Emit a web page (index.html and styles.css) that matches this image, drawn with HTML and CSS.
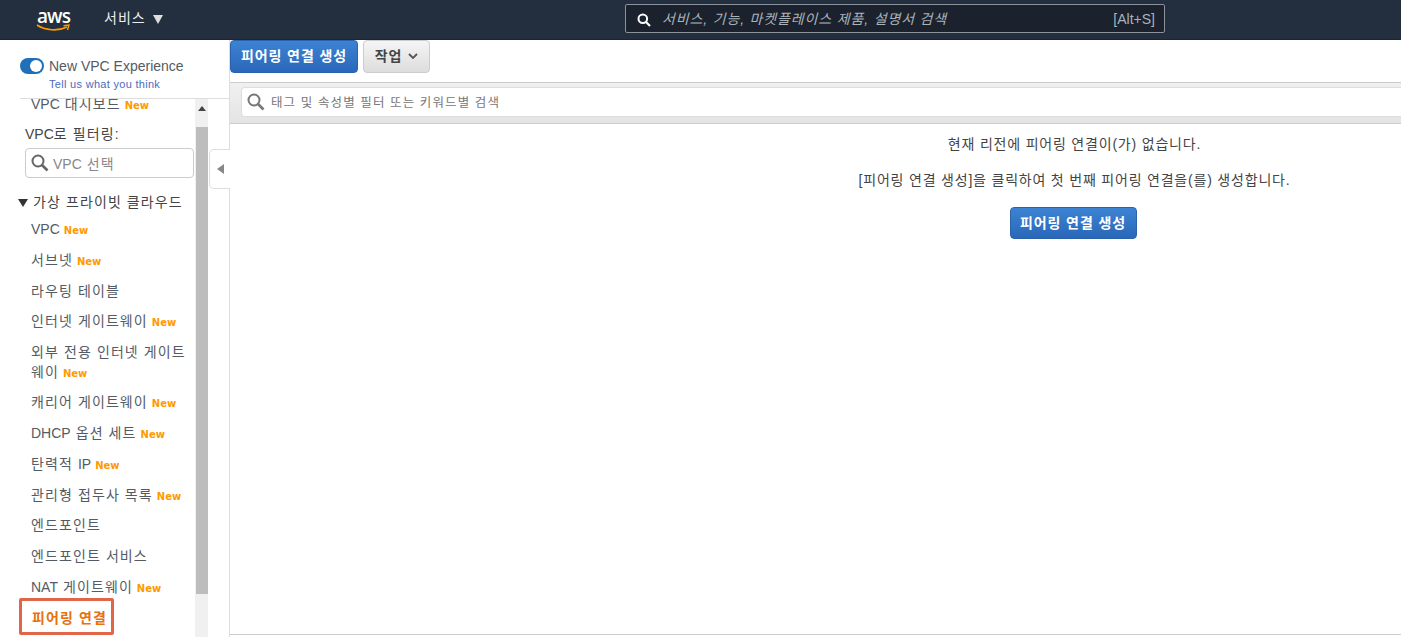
FILE: index.html
```html
<!DOCTYPE html>
<html lang="ko">
<head>
<meta charset="utf-8">
<title>VPC 피어링 연결</title>
<link rel="stylesheet" href="styles.css">
</head>
<body>
<header class="topbar">
  <a class="logo">
    <span class="logo-text">aws</span>
    <svg class="logo-smile" viewBox="0 0 34 8" width="34" height="8"><path d="M1 1C9 6.500 22 7.500 31 3" fill="none" stroke="#f90" stroke-width="1.600"/><path d="M27.500 1.800L33 1L31.500 6" fill="none" stroke="#f90" stroke-width="1.400"/></svg>
  </a>
  <div class="services">서비스<span class="caret-down"></span></div>
  <div class="global-search">
    <svg class="gs-icon" viewBox="0 0 14 14" width="14" height="14"><circle cx="5.800" cy="5.800" r="4.300" fill="none" stroke="#fff" stroke-width="2"/><path d="M9 9L13 13" stroke="#fff" stroke-width="2.200"/></svg>
    <span class="gs-text">서비스, 기능, 마켓플레이스 제품, 설명서 검색</span>
    <span class="gs-key">[Alt+S]</span>
  </div>
</header>
<div class="page">
  <aside class="sidebar">
    <div class="experience">
      <div class="exp-row"><span class="toggle"><span class="knob"></span></span><span class="exp-label">New VPC Experience</span></div>
      <a class="exp-link">Tell us what you think</a>
    </div>
    <div class="side-body">
      <nav class="nav">
        <div class="item first"><span class="lat">VPC</span> 대시보드 <b>New</b></div>
        <div class="filter-label"><span class="lat">VPC</span>로 필터링:</div>
        <div class="vpc-select">
          <svg class="mag" viewBox="0 0 18 18" width="18" height="18"><circle cx="7" cy="7" r="5.500" fill="none" stroke="#666" stroke-width="2"/><path d="M11 11L16.500 16.500" stroke="#666" stroke-width="2.600"/></svg>
          <span><span class="lat">VPC</span> 선택</span>
        </div>
        <div class="section"><span class="tri"></span>가상 프라이빗 클라우드</div>
        <div class="item"><span class="lat">VPC</span> <b>New</b></div>
        <div class="item">서브넷 <b>New</b></div>
        <div class="item">라우팅 테이블</div>
        <div class="item">인터넷 게이트웨이 <b>New</b></div>
        <div class="item wrap">외부 전용 인터넷 게이트<br>웨이 <b>New</b></div>
        <div class="item">캐리어 게이트웨이 <b>New</b></div>
        <div class="item"><span class="lat">DHCP</span> 옵션 세트 <b>New</b></div>
        <div class="item">탄력적 <span class="lat">IP</span> <b>New</b></div>
        <div class="item">관리형 접두사 목록 <b>New</b></div>
        <div class="item">엔드포인트</div>
        <div class="item">엔드포인트 서비스</div>
        <div class="item"><span class="lat">NAT</span> 게이트웨이 <b>New</b></div>
        <div class="item active">피어링 연결</div>
      </nav>
      <div class="scrollbar">
        <div class="sb-arrow"></div>
        <div class="sb-thumb"></div>
      </div>
      <div class="collapse"><span class="tri-left"></span></div>
    </div>
  </aside>
  <main class="main">
    <div class="toolbar">
      <button class="btn primary">피어링 연결 생성</button>
      <button class="btn secondary">작업<svg class="chev" viewBox="0 0 10 6" width="10" height="6"><path d="M1 1L5 5L9 1" fill="none" stroke="#555" stroke-width="1.800"/></svg></button>
    </div>
    <div class="filter-bar">
      <div class="filter-input">
        <svg class="mag" viewBox="0 0 18 18" width="18" height="18"><circle cx="7" cy="7" r="5.500" fill="none" stroke="#777" stroke-width="2"/><path d="M11 11L16.500 16.500" stroke="#777" stroke-width="2.600"/></svg>
        <span>태그 및 속성별 필터 또는 키워드별 검색</span>
      </div>
    </div>
    <div class="empty">
      <p class="msg-one">현재 리전에 피어링 연결이(가) 없습니다.</p>
      <p class="msg-two">[피어링 연결 생성]을 클릭하여 첫 번째 피어링 연결을(를) 생성합니다.</p>
      <button class="btn primary cta">피어링 연결 생성</button>
    </div>
  </main>
</div>
</body>
</html>
```
FILE: styles.css
```css
* { box-sizing: border-box; }
html, body { margin: 0; height: 100%; overflow: hidden; }
body {
  font-family: "Liberation Sans", "Noto Sans CJK KR", sans-serif;
  font-size: 14px;
  color: #444;
  background: #fff;
}
.lat { letter-spacing: 0; }
.topbar {
  height: 40px;
  background: #232f3e;
  display: flex;
  align-items: center;
  padding-bottom: 3px;
  border-bottom: 1px solid #1b2532;
}
.logo { width: 104px; flex: none; padding-left: 36px; display: block; }
.logo-text {
  display: block;
  color: #fff;
  font: 600 19px/16px "Open Sans", sans-serif;
  letter-spacing: -0.9px;
  padding-left: 1px;
  margin-top: 3px;
}
.logo-smile { display: block; }
.services { color: #eee; width: 521px; flex: none; display: flex; align-items: center; letter-spacing: 1px; line-height: 20px; }
.caret-down {
  margin-left: 7px;
  margin-top: 2px;
  width: 0; height: 0;
  border-left: 5.500px solid transparent;
  border-right: 5.500px solid transparent;
  border-top: 9px solid #ddd;
}
.global-search {
  width: 540px; height: 29px;
  margin-top: 1px;
  background: #1b222d;
  border: 1px solid #8a939b;
  border-radius: 2px;
  display: flex; align-items: center;
  padding: 0 9px 0 11px;
  color: #aab2ba;
}
.gs-icon { margin-right: 11px; margin-top: 2px; }
.gs-text { font-style: italic; flex: 1; letter-spacing: .85px; line-height: 20px; }
.gs-key { font-size: 14px; line-height: 20px; }
.page { display: flex; height: 597px; }
.sidebar { width: 230px; flex: none; border-right: 1px solid #ddd; display: flex; flex-direction: column; padding-left: 20px; }
.experience { height: 59px; border-bottom: 1px solid #ddd; padding-top: 17px; flex: none; }
.exp-row { display: flex; align-items: center; }
.toggle { width: 24px; height: 16px; border-radius: 8px; background: #1f6fb9; position: relative; margin-right: 5px; display: block; }
.knob { position: absolute; right: 2px; top: 2px; width: 12px; height: 12px; border-radius: 50%; background: #fff; }
.exp-label { font-size: 14px; color: #545b64; line-height: 18px; }
.exp-link { display: block; font-size: 11px; color: #4a6cc0; padding-left: 29px; margin-top: 2px; line-height: 14px; letter-spacing: .3px; }
.side-body { flex: 1; display: flex; position: relative; min-height: 0; }
.nav { width: 175px; flex: none; letter-spacing: 1.100px; }
.item { padding-left: 11px; height: 30.800px; line-height: 30.800px; color: #545b64; white-space: nowrap; }
.item.first { height: 11px; line-height: 10px; }
.item b { font: 700 10px/1 "DejaVu Sans", sans-serif; color: #f90; letter-spacing: 0; margin-left: -1px; }
.item.wrap { height: 50px; line-height: 20px; padding-top: 5px; }
.filter-label { padding-left: 5px; margin-top: 12px; height: 24px; line-height: 24px; color: #444; }
.vpc-select {
  margin: 2px 0 0 5px; width: 169px; height: 30px;
  border: 1px solid #ccc; border-radius: 4px;
  display: flex; align-items: center; padding-left: 5px; color: #888;
}
.vpc-select .mag { margin-right: 4px; }
.section { margin-top: 12px; height: 24px; line-height: 24px; color: #444; display: flex; align-items: center; }
.tri { width: 0; height: 0; border-left: 5.500px solid transparent; border-right: 5.500px solid transparent; border-top: 8px solid #333; margin: 2px 5px 0 -2px; }
.item.active { color: #e8710a; font-weight: 700; position: relative; padding-left: 12px; }
.item.active::before {
  content: ""; box-sizing: border-box; position: absolute; left: -1px; top: -5px; width: 95px; height: 37px;
  border: 3px solid #e0664a; border-radius: 2px;
}
.scrollbar { width: 13px; background: #f0f0f0; flex: none; }
.sb-arrow { height: 28px; position: relative; }
.sb-arrow::after { content: ""; position: absolute; left: 3px; top: 7px; border-left: 4px solid transparent; border-right: 4px solid transparent; border-bottom: 5px solid #444; }
.sb-thumb { height: 467px; background: #bdbdbd; margin-left: 1px; }
.collapse {
  position: absolute; left: 189px; top: 50px; width: 21px; height: 40px;
  background: #fff; border: 1px solid #ddd; border-right: none; border-radius: 5px 0 0 5px;
  display: flex; align-items: center; justify-content: center;
}
.tri-left { border-top: 5px solid transparent; border-bottom: 5px solid transparent; border-right: 7px solid #888; }
.main { flex: 1; min-width: 0; display: flex; flex-direction: column; border-bottom: 1px solid #ccc; height: 595px; }
.toolbar { height: 42px; flex: none; display: flex; align-items: flex-start; gap: 5px; }
.btn {
  font-family: inherit; font-size: 14px; border-radius: 4px; height: 33px; padding: 0 0 4px; display: inline-flex; align-items: center; justify-content: center; letter-spacing: .9px;
}
.primary { background: linear-gradient(#3d83d3, #2a67b8); color: #fff; font-weight: 700; border: 1px solid #2a63ab; width: 128px; flex: none; }
.secondary { background: linear-gradient(#f5f5f5, #ddd); color: #444; font-weight: 700; border: 1px solid #ccc; width: 67px; gap: 6px; }
.chev { margin-top: 3px; }
.filter-bar { height: 42px; flex: none; background: linear-gradient(#f0f0f0, #e4e4e4); border-top: 1px solid #ccc; border-bottom: 1px solid #ccc; padding: 4px 0 0 11px; }
.filter-input { height: 30px; background: #fff; border: 1px solid #ddd; border-right: none; border-radius: 4px 0 0 4px; display: flex; align-items: center; padding-left: 5px; color: #777; font-size: 12.500px; letter-spacing: 1.100px; line-height: 20px; }
.filter-input span { margin-top: 1px; }
.filter-input .mag { margin-right: 6px; flex: none; }
.empty { flex: 1; display: flex; flex-direction: column; align-items: center; padding-left: 518px; letter-spacing: .8px; }
.empty p { margin: 0; color: #444; height: 20px; line-height: 20px; white-space: nowrap; }
.empty .msg-one { margin-top: 10px; }
.empty .msg-two { margin-top: 16px; }
.empty .cta { margin: 17px 0 0 -3px; width: 127px; height: 32px; letter-spacing: .9px; padding-bottom: 3px; }
```
